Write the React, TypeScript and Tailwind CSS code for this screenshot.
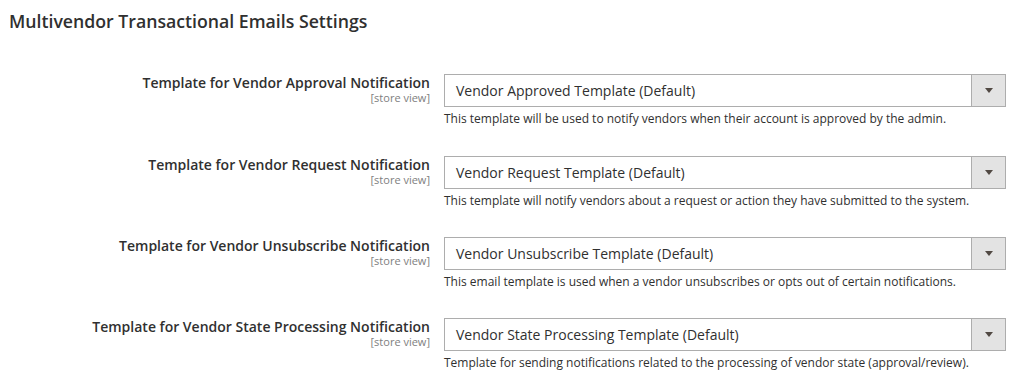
const rows = [
  {
    label: 'Template for Vendor Approval Notification',
    value: 'Vendor Approved Template (Default)',
    note: 'This template will be used to notify vendors when their account is approved by the admin.',
  },
  {
    label: 'Template for Vendor Request Notification',
    value: 'Vendor Request Template (Default)',
    note: 'This template will notify vendors about a request or action they have submitted to the system.',
  },
  {
    label: 'Template for Vendor Unsubscribe Notification',
    value: 'Vendor Unsubscribe Template (Default)',
    note: 'This email template is used when a vendor unsubscribes or opts out of certain notifications.',
  },
  {
    label: 'Template for Vendor State Processing Notification',
    value: 'Vendor State Processing Template (Default)',
    note: 'Template for sending notifications related to the processing of vendor state (approval/review).',
  },
];

function Arrow() {
  return (
    <svg viewBox="0 0 8 5" className="w-2 h-[5px]">
      <polygon points="0,0 8,0 4,5" fill="#514943" />
    </svg>
  );
}

export default function App() {
  return (
    <div className="w-[1025px] h-[382px] bg-white overflow-hidden text-[#303030] font-['Open_Sans',sans-serif]">
      <h2 className="pl-[9px] pt-[9px] text-[17.7px] leading-6 font-semibold">Multivendor Transactional Emails Settings</h2>
      <div className="mt-[41px] flex flex-col">
        {rows.map((row, i) => (
          <div key={row.label} className={`flex ${i === 0 ? 'mb-[28px]' : 'mb-[27px]'}`}>
            <div className="w-[430px] shrink-0 text-right pt-px">
              <div className="text-sm leading-4 font-semibold">{row.label}</div>
              <div className="text-[11px] leading-[13px] text-[#808080]">[store view]</div>
            </div>
            <div className="ml-[14px] w-[562px]">
              <div className="flex h-[33px] border border-[#adadad] bg-white">
                <div className="flex-1 pl-[11px] pt-px text-sm leading-[30px]">{row.value}</div>
                <div className="w-[34px] border-l border-[#adadad] bg-[#e3e3e3] flex items-center justify-center">
                  <Arrow />
                </div>
              </div>
              <p className="mt-[3px] text-xs leading-[18px]">{row.note}</p>
            </div>
          </div>
        ))}
      </div>
    </div>
  );
}
